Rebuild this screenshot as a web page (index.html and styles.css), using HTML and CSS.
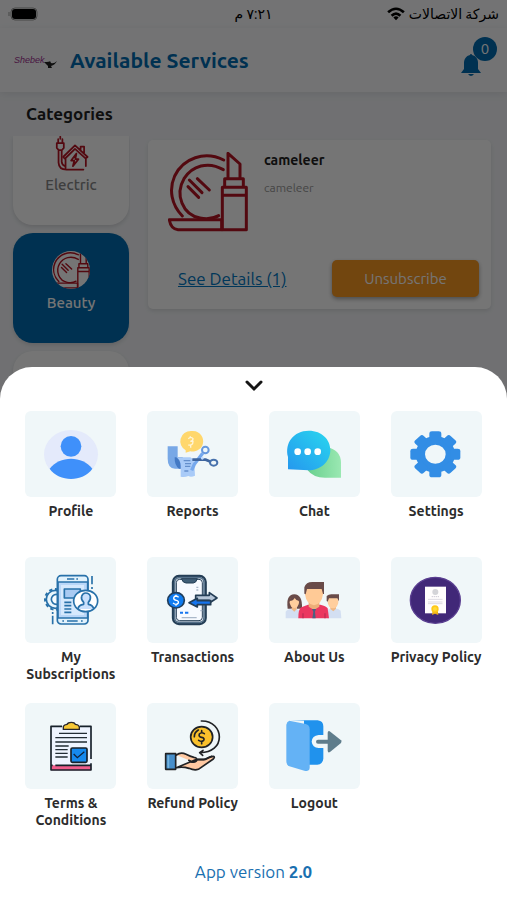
FILE: index.html
```html
<!DOCTYPE html>
<html lang="en">
<head>
  <meta charset="UTF-8">
  <title>Available Services</title>
  <meta name="viewport" content="width=device-width, initial-scale=1">
  <link rel="stylesheet" href="styles.css">
</head>
<body>
  <!-- shared icon, used in the category list and in the service card -->
  <svg class="sprite" aria-hidden="true">
    <symbol id="beauty" viewBox="0 0 240 240">
      <g fill="none" stroke="#b51524" stroke-width="9" stroke-linejoin="round" stroke-linecap="round">
        <path d="M167 24C110-4 46 18 20 72C2 112 10 158 43 192"/>
        <path d="M166 53C120 26 72 42 48 80C20 128 44 188 96 198C118 202 136 200 152 191"/>
        <path d="M88 80l36 34M64 84l38 38M60 104l32 32"/>
        <path d="M4 203H161V233H30Q8 231 4 203Z"/>
        <path d="M163 106H235V233H163ZM163 130H235M170 80H226V106H170ZM180 80V4L216 36V80"/>
      </g>
    </symbol>
  </svg>

  <div class="page">
    <div class="status-bar" dir="rtl" lang="ar">
      <div class="carrier">
        <span>شركة الاتصالات</span>
        <svg width="18" height="14" viewBox="0 0 20 16" aria-hidden="true">
          <g fill="none" stroke="#000" stroke-width="3">
            <path d="M1 6Q10-2 19 6M5 10Q10 5 15 10"/>
          </g>
          <path d="M10 15L7 12Q10 9 13 12Z"/>
        </svg>
      </div>
      <span class="time">٧:٢١ م</span>
      <svg class="battery" width="30" height="14" viewBox="0 0 30 14" aria-hidden="true">
        <rect x="3" y="1" width="26" height="12" rx="4" fill="none" stroke="#999"/>
        <rect x="4" y="2" width="24" height="10" rx="3"/>
        <path d="M1 5v4" stroke="#999"/>
      </svg>
    </div>

    <header class="header">
      <svg class="logo" width="44" height="18" viewBox="0 0 44 18" role="img" aria-label="Shebek">
        <text x="0" y="12" class="logo-text">Shebek</text>
        <path d="M30 11Q36 11 36 10L37 12Q40 13 43 10Q41 14 37 15L38 17H34V15Q32 13 30 11Z" fill="#222"/>
      </svg>
      <h1>Available Services</h1>
      <button class="bell" aria-label="Notifications">
        <svg width="20" height="24" viewBox="0 0 20 24" aria-hidden="true">
          <path d="M9 2a1 1 0 0 1 2 0c4 1 6 4 6 8v6l3 4H0l3-4v-6c0-4 2-7 6-8zM7 21h6q-3 4-6 0z" fill="#006bb0"/>
        </svg>
        <span class="badge">0</span>
      </button>
    </header>

    <main>
      <h2>Categories</h2>
      <div class="content">
        <div class="category-list">
          <button class="category first">
            <svg width="35" height="35" viewBox="0 0 100 100" aria-hidden="true">
              <g fill="none" stroke="#b51524" stroke-width="5" stroke-linejoin="round" stroke-linecap="round">
                <path d="M8 20H28V34L23 40H13L8 34ZM12 20V9M24 20V9M18 8V2M13 40V76Q14 96 36 96H84M22 42V74Q23 84 32 86"/>
                <path d="M26 60L60 27L96 60L90 64L60 37L31 65ZM33 64V92M91 66V86M76 38V30H86V48"/>
                <path d="M64 50L49 70H58L54 86L70 66H61Z"/>
              </g>
            </svg>
            <span>Electric</span>
          </button>
          <button class="category active">
            <span class="round"><svg width="40" height="38" aria-hidden="true"><use href="#beauty"/></svg></span>
            <span>Beauty</span>
          </button>
          <button class="category" aria-label="More"></button>
        </div>
        <article class="service">
          <div class="service-info">
            <svg width="80" height="80" aria-hidden="true"><use href="#beauty"/></svg>
            <div>
              <h3>cameleer</h3>
              <p>cameleer</p>
            </div>
          </div>
          <div class="service-actions">
            <a href="#">See Details (1)</a>
            <button class="unsubscribe">Unsubscribe</button>
          </div>
        </article>
      </div>
    </main>
  </div>

  <div class="overlay"></div>

  <section class="sheet">
    <button class="collapse" aria-label="Close menu">
      <svg width="20" height="14" viewBox="0 0 20 14" aria-hidden="true">
        <path d="M3 3l7 7 7-7" fill="none" stroke="#151515" stroke-width="3" stroke-linecap="round"/>
      </svg>
    </button>

    <nav class="menu">
      <a href="#" class="item">
        <span class="tile">
          <svg viewBox="0 0 180 162" aria-hidden="true">
            <ellipse cx="90" cy="82" rx="81" ry="73" fill="#e4eafb"/>
            <circle cx="90" cy="58" r="31" fill="#3f90fa"/>
            <path d="M26 125C55 85 125 85 154 125C125 166 55 166 26 125Z" fill="#3f90fa"/>
          </svg>
        </span>
        <span class="label">Profile</span>
      </a>
      <a href="#" class="item">
        <span class="tile">
          <svg viewBox="0 0 180 162" aria-hidden="true">
            <path d="M14 58H44V90Q44 112 60 125H36Q14 124 14 95Z" fill="#78a8e6"/>
            <path d="M35 91H60Q48 105 58 125H48Q34 115 35 91Z" fill="#4379c4"/>
            <path d="M40 91H82Q92 95 94 110L96 146Q84 152 76 147Q65 152 53 149V116Q52 98 40 91Z" fill="#a9cbf8"/>
            <path d="M62 101h20M66 110h18M66 118h16M64 132h12" stroke="#648fcb" stroke-width="4"/>
            <path d="M86 130L94 112L119 79" stroke="#75a8ed" stroke-width="10" fill="none"/>
            <path d="M88 98L128 98L143 104" stroke="#3e659f" stroke-width="8" fill="none"/>
            <circle cx="127" cy="69" r="10" fill="none" stroke="#6798dc" stroke-width="6"/>
            <ellipse cx="152" cy="107" rx="11" ry="9" fill="none" stroke="#4771ac" stroke-width="6"/>
            <circle cx="118" cy="94" r="4" fill="#c2dcff"/>
            <path d="M84 12a32 31 0 1 1-2 61L68 77V70A32 31 0 0 1 84 12Z" fill="#ffd76c"/>
            <path d="M76 35q8-8 14 0 0 7-8 8h8q0 14-14 11M82 28v6M83 55v7" fill="none" stroke="#fff5d8" stroke-width="4"/>
          </svg>
        </span>
        <span class="label">Reports</span>
      </a>
      <a href="#" class="item">
        <span class="tile">
          <svg viewBox="0 0 180 162" aria-hidden="true">
            <defs>
              <linearGradient id="chatBlue" x1="1" y1="0" x2="0" y2="1"><stop stop-color="#29d7ef"/><stop offset="1" stop-color="#2597ee"/></linearGradient>
              <linearGradient id="chatGreen"><stop stop-color="#69d08e"/><stop offset="1" stop-color="#9ae8b2"/></linearGradient>
            </defs>
            <path d="M126 59Q171 68 171 107V152H126Q88 153 71 130Z" fill="url(#chatGreen)"/>
            <path d="M12 127V90C1 48 29 11 74 11C115 11 139 39 139 69C139 105 108 130 74 130Z" fill="url(#chatBlue)"/>
            <circle cx="41" cy="74" r="10" fill="#fff"/><circle cx="71" cy="74" r="10" fill="#fff"/><circle cx="101" cy="74" r="10" fill="#fff"/>
          </svg>
        </span>
        <span class="label">Chat</span>
      </a>
      <a href="#" class="item">
        <span class="tile">
          <svg viewBox="0 0 180 162" aria-hidden="true">
            <g transform="translate(88 82) scale(1 .92)" fill="#328de5">
              <circle r="45" fill="none" stroke="#328de5" stroke-width="28"/>
              <rect x="-18" y="-75" width="36" height="30" rx="8"/>
              <rect x="-18" y="-75" width="36" height="30" rx="8" transform="rotate(45)"/>
              <rect x="-18" y="-75" width="36" height="30" rx="8" transform="rotate(90)"/>
              <rect x="-18" y="-75" width="36" height="30" rx="8" transform="rotate(135)"/>
              <rect x="-18" y="-75" width="36" height="30" rx="8" transform="rotate(180)"/>
              <rect x="-18" y="-75" width="36" height="30" rx="8" transform="rotate(225)"/>
              <rect x="-18" y="-75" width="36" height="30" rx="8" transform="rotate(270)"/>
              <rect x="-18" y="-75" width="36" height="30" rx="8" transform="rotate(315)"/>
            </g>
          </svg>
        </span>
        <span class="label">Settings</span>
      </a>

      <a href="#" class="item">
        <span class="tile">
          <svg viewBox="0 0 180 162" aria-hidden="true">
            <g fill="none" stroke="#2871a9" stroke-width="5" stroke-linejoin="round">
              <circle cx="43" cy="79" r="27" fill="#e9f6fd"/>
              <circle cx="43" cy="79" r="31" stroke-width="6" stroke-dasharray="10 8"/>
              <circle cx="46" cy="79" r="15" fill="#f7fcff"/>
              <rect x="49" y="8" width="92" height="145" rx="11" fill="#e2f2fc"/>
              <path d="M51 27H140V135H51Z" fill="#bad7f8"/>
              <path d="M60 36H129V126H60Z" fill="#d6e9fd" stroke="none"/>
              <path d="M70 48H118V75H70Z" fill="#a9caf2"/>
              <path d="M70 88H91M70 98H91M70 108H91M70 118H91M78 18H100M106 18H111M78 144H110M64 144H69M120 144H125"/>
              <ellipse cx="134" cy="84" rx="36" ry="32" fill="#fff"/>
              <path d="M111 108Q112 96 128 94V88Q119 79 122 70Q125 60 134 60Q145 60 148 70Q150 80 142 88V94Q156 96 158 108" fill="#c9e0fc"/>
              <path d="M153 9V34M153 42V48M35 117V123M35 128V154"/>
            </g>
          </svg>
        </span>
        <span class="label">My Subscriptions</span>
      </a>
      <a href="#" class="item">
        <span class="tile">
          <svg viewBox="0 0 180 162" aria-hidden="true">
            <rect x="30" y="9" width="98" height="144" rx="18" fill="#f7faff" stroke="#243e56" stroke-width="7"/>
            <rect x="35" y="14" width="88" height="134" rx="14" fill="none" stroke="#55718a" stroke-width="5"/>
            <rect x="40" y="19" width="78" height="124" rx="10" fill="none" stroke="#243e56" stroke-width="3"/>
            <path d="M55 17Q60 30 69 30H91Q99 30 103 17Z" fill="#405e77" stroke="#243e56" stroke-width="3"/>
            <path d="M51 119H60M66 119H76" stroke="#1675ef" stroke-width="6"/>
            <path d="M56 134H101M100 43H106M100 51H106M112 113H118" stroke="#aab8ca" stroke-width="4"/>
            <ellipse cx="39" cy="82" rx="25" ry="23" fill="#107bef" stroke="#213e5c" stroke-width="5"/>
            <path d="M47 73Q35 64 32 75Q32 81 40 82Q48 84 46 90Q40 98 30 90M39 65V72M39 92V98" fill="none" stroke="#fff" stroke-width="4"/>
            <path d="M98 67H139V59L162 75L139 90V82H98Z" fill="#b6c6d8" stroke="#243e56" stroke-width="5" stroke-linejoin="round"/>
            <path d="M143 83H103V76L78 89L103 102V95H143Z" fill="#1675ef" stroke="#243e56" stroke-width="5" stroke-linejoin="round"/>
          </svg>
        </span>
        <span class="label">Transactions</span>
      </a>
      <a href="#" class="item">
        <span class="tile">
          <svg viewBox="0 0 180 162" aria-hidden="true">
            <path d="M11 107Q5 65 31 64Q56 65 54 107Z" fill="#694b49"/>
            <path d="M24 94H39V109L54 117V136H5V116Q10 108 24 107Z" fill="#d3dff2"/>
            <path d="M24 97H38V109L31 116L23 109Z" fill="#efb784"/>
            <ellipse cx="31" cy="88" rx="14" ry="17" fill="#ffce9d"/>
            <path d="M16 84Q28 84 32 75Q36 83 47 85Q45 68 31 68Q18 69 16 84Z" fill="#694b49"/>
            <path d="M129 136V110Q160 101 170 113L172 136Z" fill="#d3dff2"/>
            <path d="M139 96H156V107L148 115L139 108Z" fill="#efb784"/>
            <ellipse cx="147" cy="87" rx="16" ry="19" fill="#ffce9d"/>
            <path d="M128 84V69Q135 62 147 64H165V85L160 76H135L131 86Z" fill="#694b49"/>
            <path d="M43 136Q43 107 52 103L72 95H109Q126 99 131 106L135 136Z" fill="#eb3760"/>
            <path d="M74 86H106V101L90 111L74 101Z" fill="#edae78"/>
            <path d="M63 52Q62 33 90 33Q118 33 117 54V64Q113 95 90 97Q67 94 63 64Z" fill="#ffca96"/>
            <path d="M61 62V43Q66 27 85 27H120V63H117L113 48H69L65 64Z" fill="#694b49"/>
            <path d="M84 108H96L93 116L95 136H85L88 116Z" fill="#4b6080"/>
            <path d="M57 121V136M123 121V136" stroke="#bd2d54" stroke-width="4"/>
          </svg>
        </span>
        <span class="label">About Us</span>
      </a>
      <a href="#" class="item">
        <span class="tile">
          <svg viewBox="0 0 180 162" aria-hidden="true">
            <ellipse cx="88" cy="82" rx="75" ry="69" fill="#412878" stroke="#5a3f91" stroke-width="4"/>
            <path d="M57 41H120V121H57Z" fill="#fffdfd"/>
            <circle cx="88" cy="57" r="9" fill="#d4d4d8"/>
            <path d="M77 71H99M67 79H110M67 87H110M67 92H110" stroke="#ccc9d4" stroke-width="3" stroke-dasharray="4 2"/>
            <path d="M80 112L78 126L87 122L97 126L95 111Z" fill="#e8ab18"/>
            <circle cx="87" cy="108" r="11" fill="#ffc817"/>
            <circle cx="87" cy="108" r="6" fill="#ffda38"/>
          </svg>
        </span>
        <span class="label">Privacy Policy</span>
      </a>

      <a href="#" class="item">
        <span class="tile">
          <svg viewBox="0 0 180 162" aria-hidden="true">
            <path d="M30 22H150V153H30Z" fill="#eef4ff"/>
            <path d="M30 139H150V154H30Z" fill="#ef5c8c"/>
            <path d="M63 22H30V153H150V133M117 22H150V120M30 139H35M43 139H150" fill="none" stroke="#17212b" stroke-width="5" stroke-linejoin="round"/>
            <path d="M67 31V22Q70 17 78 16Q81 10 91 10Q101 10 103 16Q113 17 115 23V31Z" fill="#f6c735" stroke="#27252a" stroke-width="4"/>
            <path d="M54 43H138M43 56H138M43 69H138M43 81H83M43 92H80M43 103H80M43 114H80" stroke="#222c35" stroke-width="4"/>
            <rect x="90" y="87" width="48" height="43" rx="4" fill="#1689ee" stroke="#17212b" stroke-width="5"/>
            <path d="M98 105L109 116L130 98" fill="none" stroke="#10233d" stroke-width="4"/>
          </svg>
        </span>
        <span class="label">Terms &amp; Conditions</span>
      </a>
      <a href="#" class="item">
        <span class="tile">
          <svg viewBox="0 0 180 162" aria-hidden="true">
            <g stroke="#202225" stroke-width="5" stroke-linejoin="round" stroke-linecap="round">
              <path d="M115 6C151 5 169 31 169 54C169 81 147 101 112 101M120 94L110 101L119 109" fill="none"/>
              <ellipse cx="116" cy="54" rx="33" ry="31" fill="#fac12c"/>
              <path d="M94 53C94 43 99 37 106 33" fill="none"/>
              <path d="M124 44Q115 38 109 45Q106 54 116 55Q126 57 122 64Q116 70 107 64M116 35V41M116 68V74" fill="none"/>
              <path d="M40 108Q54 98 69 106Q82 113 93 115Q103 116 101 125Q99 130 84 128L78 124M101 121L128 121Q142 112 151 112Q157 113 151 120L106 151Q94 155 78 148Q59 142 40 146Z" fill="#ffc9a2"/>
              <path d="M78 124L86 129Q97 131 101 122H122L146 112" fill="none"/>
              <path d="M8 104H38V151H8Z" fill="#478fcb"/>
              <path d="M16 111V145" stroke="#74b3df"/>
            </g>
          </svg>
        </span>
        <span class="label">Refund Policy</span>
      </a>
      <a href="#" class="item">
        <span class="tile">
          <svg viewBox="0 0 180 162" aria-hidden="true">
            <path d="M20 4H101Q118 6 118 22V48H104Q84 50 83 68Q85 85 104 87H118V119Q116 136 100 137H60V5Z" fill="#2092ed"/>
            <path d="M16 5L65 15Q77 18 77 31V147Q75 159 61 155L16 142Q7 138 7 126V17Q8 8 16 5Z" fill="#64b2f5"/>
            <path d="M102 68H139" stroke="#5f7d8c" stroke-width="12" stroke-linecap="round"/>
            <path d="M132 38Q134 34 139 38L171 64Q174 68 171 72L138 99Q132 103 131 95V41Z" fill="#5f7d8c"/>
          </svg>
        </span>
        <span class="label">Logout</span>
      </a>
    </nav>

    <p class="version">App version <b>2.0</b></p>
  </section>
</body>
</html>
```

FILE: styles.css
```css
* {
  box-sizing: border-box;
}
body {
  margin: 0;
  font-family: Ubuntu, 'Noto Sans', 'DejaVu Sans', sans-serif;
  color: #222;
  background: #f3f5f8;
}
h1, h2, h3, p {
  margin: 0;
}
button {
  font-family: inherit;
  border: none;
  padding: 0;
  cursor: pointer;
}
.sprite {
  display: none;
}
.page {
  height: 100vh;
  overflow: hidden;
}

/* status bar */
.status-bar {
  display: grid;
  grid-template-columns: 1fr auto 1fr;
  align-items: center;
  height: 28px;
  padding: 0 8px;
  background: #fafbfd;
  font-size: 14px;
  color: #000;
}
.carrier {
  display: flex;
  align-items: center;
  gap: 4px;
}
.battery {
  justify-self: end;
}

/* header */
.header {
  display: flex;
  align-items: center;
  height: 64px;
  padding: 0 22px 0 14px;
  background: #fafbfd;
  box-shadow: 0 2px 8px rgba(0,0,0,0.08);
}
.logo-text {
  font-family: 'Liberation Sans', sans-serif;
  font-style: italic;
  font-size: 9px;
  fill: #a03090;
}
.header h1 {
  flex: 1;
  margin-left: 12px;
  font-size: 21px;
  font-weight: 600;
  line-height: 28px;
  color: #006bb0;
}
.bell {
  position: relative;
  background: none;
  height: 24px;
  margin-top: 10px;
  margin-right: 4px;
}
.badge {
  position: absolute;
  top: -16px;
  left: 12px;
  width: 24px;
  height: 24px;
  border-radius: 50%;
  background: #006bb0;
  color: #fff;
  font-size: 15px;
  line-height: 24px;
}

/* categories and services */
main h2 {
  padding: 10px 26px;
  font-size: 17px;
  font-weight: 600;
  line-height: 24px;
}
.content {
  display: flex;
  align-items: flex-start;
  gap: 18px;
  padding-right: 16px;
}
.category-list {
  display: flex;
  flex-direction: column;
  gap: 8px;
  width: 130px;
  height: 320px;
  padding-left: 13px;
  overflow: hidden;
}
.category {
  display: flex;
  flex-direction: column;
  align-items: center;
  flex: none;
  gap: 4px;
  width: 116px;
  height: 110px;
  padding-top: 18px;
  border-radius: 20px;
  background: #fff;
  box-shadow: 0 2px 4px rgba(0,0,0,0.12);
  color: #888;
  font-size: 15px;
  font-weight: 500;
  line-height: 20px;
}
.category.first {
  height: 89px;
  padding-top: 0;
  border-radius: 0 0 20px 20px;
}
.category.active {
  background: #006bb0;
  color: #fff;
}
.round {
  display: flex;
  justify-content: center;
  width: 38px;
  height: 38px;
  border-radius: 50%;
  background: #fff;
  overflow: hidden;
}
.service {
  flex: 1;
  margin-top: 4px;
  padding: 12px;
  border-radius: 5px;
  background: #fff;
  box-shadow: 0 2px 4px rgba(0,0,0,0.1);
}
.service-info {
  display: flex;
  gap: 16px;
  padding-left: 8px;
}
.service-info h3 {
  font-size: 14px;
  font-weight: 600;
  line-height: 16px;
}
.service-info p {
  margin-top: 12px;
  font-size: 12px;
  line-height: 16px;
  color: #999;
}
.service-actions {
  display: flex;
  justify-content: space-between;
  align-items: center;
  padding: 28px 0 0 18px;
}
.service-actions a {
  font-size: 17px;
  color: #0078c4;
}
.unsubscribe {
  width: 147px;
  height: 37px;
  border-radius: 5px;
  background: #f99822;
  box-shadow: 0 2px 4px rgba(0,0,0,0.35);
  color: #fff;
  font-size: 15px;
}
.overlay {
  position: fixed;
  inset: 0;
  background: rgba(0,0,0,0.54);
}

/* bottom menu */
.sheet {
  position: fixed;
  left: 0;
  right: 0;
  bottom: 0;
  padding: 0 10px 16px;
  border-radius: 32px 32px 0 0;
  background: #fff;
}
.collapse {
  display: flex;
  align-items: center;
  justify-content: center;
  width: 40px;
  height: 38px;
  margin: 0 auto 6px;
  background: none;
}
.menu {
  display: grid;
  grid-template-columns: repeat(4, 1fr);
  row-gap: 20px;
}
.item {
  display: flex;
  flex-direction: column;
  align-items: center;
  gap: 6px;
  color: #2c2c2c;
  text-decoration: none;
}
.tile {
  display: flex;
  align-items: center;
  justify-content: center;
  width: 91px;
  height: 86px;
  border-radius: 6px;
  background: #f0f7f9;
}
.tile svg {
  width: 60px;
  height: 54px;
}
.label {
  max-width: 110px;
  min-height: 34px;
  font-size: 14px;
  font-weight: 600;
  line-height: 17px;
  text-align: center;
}
.version {
  margin-top: 31px;
  font-size: 17px;
  line-height: 24px;
  text-align: center;
  color: #1a70b0;
}
```
